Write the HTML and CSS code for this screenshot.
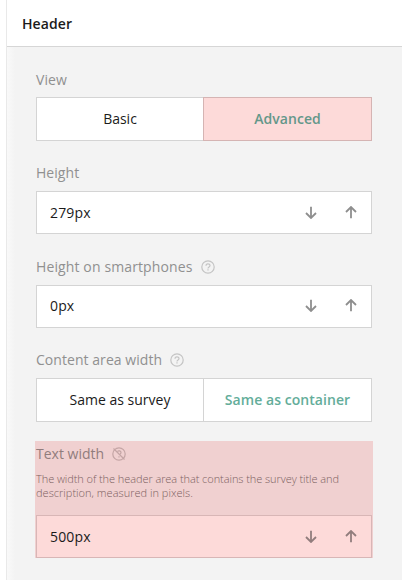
FILE: index.html
```html
<!DOCTYPE html>
<html lang="en">
<head>
<meta charset="utf-8">
<title>Header settings</title>
<link rel="stylesheet" href="styles.css">
</head>
<body>
<svg class="defs" width="0" height="0" aria-hidden="true">
  <symbol id="down" viewBox="0 0 12 13"><path d="M6 .8V12M1 7l5 5 5-5"/></symbol>
  <symbol id="up" viewBox="0 0 12 13"><path d="M6 12.2V1M1 6l5-5 5 5"/></symbol>
  <symbol id="help" viewBox="0 0 14 14"><circle cx="7" cy="7" r="6.2"/><path d="M5 5.8C5 3.2 9 3.2 9 5.6 9 7 7 6.900 7 8.400M7 9.300v1.300"/></symbol>
  <symbol id="help-off" viewBox="0 0 14 14"><circle cx="7" cy="7" r="6.2"/><path d="M5.500 4.400C6.500 3.400 9 3.600 9 5.600 9 6.300 8.600 6.700 8.200 7.100M7 9.300v1.300M1.500 1.500l11 11"/></symbol>
</svg>
<main class="panel">
  <header class="title">Header</header>
  <div class="content">
    <section class="field">
      <div class="label first">View</div>
      <div class="toggle">
        <div class="option">Basic</div>
        <div class="option selected marked">Advanced</div>
      </div>
    </section>
    <section class="field">
      <div class="label">Height</div>
      <div class="input"><span>279px</span><svg class="arrow"><use href="#down"/></svg><svg class="arrow"><use href="#up"/></svg></div>
    </section>
    <section class="field">
      <div class="label wide">Height on smartphones<svg class="help"><use href="#help"/></svg></div>
      <div class="input raised"><span>0px</span><svg class="arrow"><use href="#down"/></svg><svg class="arrow"><use href="#up"/></svg></div>
    </section>
    <section class="field">
      <div class="label short">Content area width<svg class="help"><use href="#help"/></svg></div>
      <div class="toggle">
        <div class="option">Same as survey</div>
        <div class="option selected">Same as container</div>
      </div>
    </section>
    <section class="field highlight">
      <div class="label">Text width<svg class="help"><use href="#help-off"/></svg></div>
      <p class="hint">The width of the header area that contains the survey title and<br><span class="loose">description, measured in pixels.</span></p>
      <div class="input"><span>500px</span><svg class="arrow"><use href="#down"/></svg><svg class="arrow"><use href="#up"/></svg></div>
    </section>
  </div>
</main>
</body>
</html>
```
FILE: styles.css
```css
* { box-sizing: border-box; }
body {
  margin: 0;
  background: #fff;
  font: 14px/20px "Open Sans", "Noto Sans", sans-serif;
  color: #1b1b1b;
  overflow: hidden;
}
.defs { display: block; height: 0; }
.panel {
  height: 580px;
  margin-left: 6px;
  border-left: 1px solid #e9e9e9;
}
.title {
  height: 47px;
  padding: 14px 15px 0;
  background: #fff;
  border-bottom: 1px solid #d6d6d6;
  font-weight: 600;
  letter-spacing: 0.1px;
}
.content {
  height: 533px;
  padding: 22px 30px 0 29px;
  background: linear-gradient(90deg, #f9f9f9, #f3f3f3 8px);
}
.label {
  display: flex;
  align-items: center;
  height: 28px;
  padding-bottom: 9px;
  color: #909090;
  letter-spacing: 0.05px;
}
.label.first { padding-bottom: 7px; }
.wide { letter-spacing: 0.12px; }
.toggle {
  display: grid;
  grid-template-columns: 166px 168px;
  height: 44px;
  margin-bottom: 22px;
  border: 1px solid #d4d4d4;
  background: #fff;
}
.option {
  display: flex;
  align-items: center;
  justify-content: center;
}
.selected {
  border-left: 1px solid #d4d4d4;
  color: #64ad9a;
  font-weight: 600;
  letter-spacing: 0.05px;
}
.marked {
  margin: -1px;
  margin-left: 0;
  background: #fddad9;
  border: 1px solid #d5b4b3;
  color: #64978a;
}
.input {
  display: flex;
  align-items: center;
  height: 43px;
  margin-bottom: 23px;
  padding: 0 14px 0 13px;
  border: 1px solid #d4d4d4;
  background: #fff;
}
.raised { padding-bottom: 2px; }
.input span {
  flex: 1;
  letter-spacing: 0.15px;
}
.arrow {
  width: 12px;
  height: 13px;
  margin-left: 28px;
  fill: none;
  stroke: #8e8e8e;
  stroke-width: 1.8;
}
.help {
  width: 14px;
  height: 14px;
  margin-left: 8px;
  fill: none;
  stroke: #c4c4c4;
  stroke-width: 1.2;
}
.short { height: 27px; }
.highlight {
  width: 338px;
  height: 117px;
  margin: -3px 0 0 -1px;
  padding: 2px 1px 0;
  background: #f0d0d0;
}
.highlight .label {
  padding-bottom: 7px;
  color: #917d7d;
  letter-spacing: 0;
}
.highlight .help { stroke: #c4a5a5; }
.hint {
  height: 44px;
  margin: 0;
  padding-top: 1px;
  font-size: 11px;
  font-weight: 300;
  line-height: 14px;
  letter-spacing: -0.065px;
  color: #7d6262;
}
.loose { letter-spacing: 0.02px; }
.highlight .input { background: #fddad9; border-color: #d8b6b6; }
.highlight .arrow { stroke: #917d7d; }
```
